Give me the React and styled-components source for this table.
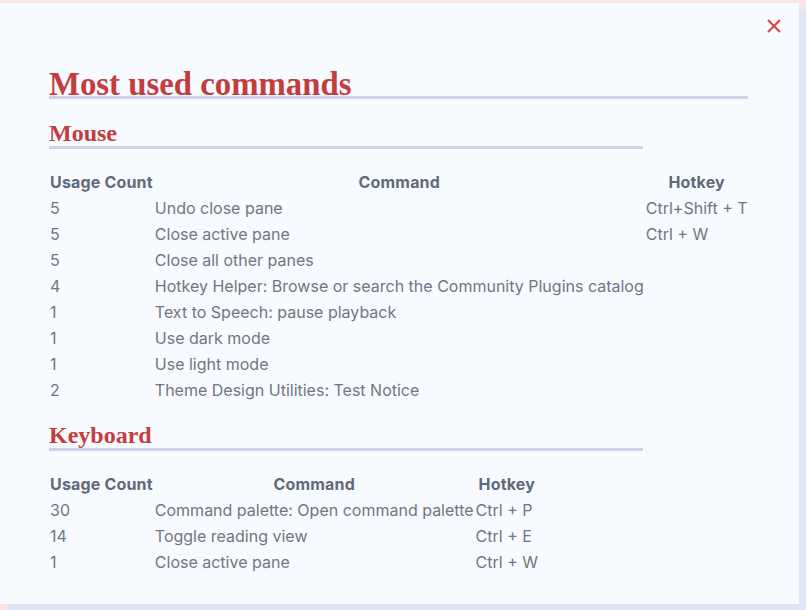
import React from 'react';
import styled, { createGlobalStyle } from 'styled-components';

const GlobalStyle = createGlobalStyle`
    html, body { margin: 0; padding: 0; background: #fae3e6; }
    body { font-family: Inter, "Noto Sans", sans-serif; overflow: hidden; }
`;

const mouseRows = [
    { count: 5, command: 'Undo close pane', hotkey: 'Ctrl+Shift + T' },
    { count: 5, command: 'Close active pane', hotkey: 'Ctrl + W' },
    { count: 5, command: 'Close all other panes', hotkey: '' },
    { count: 4, command: 'Hotkey Helper: Browse or search the Community Plugins catalog', hotkey: '' },
    { count: 1, command: 'Text to Speech: pause playback', hotkey: '' },
    { count: 1, command: 'Use dark mode', hotkey: '' },
    { count: 1, command: 'Use light mode', hotkey: '' },
    { count: 2, command: 'Theme Design Utilities: Test Notice', hotkey: '' },
];

const keyboardRows = [
    { count: 30, command: 'Command palette: Open command palette', hotkey: 'Ctrl + P' },
    { count: 14, command: 'Toggle reading view', hotkey: 'Ctrl + E' },
    { count: 1, command: 'Close active pane', hotkey: 'Ctrl + W' },
];

const UsageTable = ({ rows }) => (
    <Table>
        <thead>
            <tr>
                <Th>Usage Count</Th>
                <Th>Command</Th>
                <Th>Hotkey</Th>
            </tr>
        </thead>
        <tbody>
            {rows.map((row, i) => (
                <tr key={i}>
                    <Td>{row.count}</Td>
                    <Td>{row.command}</Td>
                    <Td>{row.hotkey}</Td>
                </tr>
            ))}
        </tbody>
    </Table>
);

const App = () => {
    return (
        <>
            <GlobalStyle />
            <Page>
                <Modal>
                    <CloseButton aria-label="Close">
                        <svg width="14" height="14" viewBox="0 0 14 14">
                            <path d="M1 1 L13 13 M13 1 L1 13" stroke="#d6494a" strokeWidth="2.2" />
                        </svg>
                    </CloseButton>
                    <Title>Most used commands</Title>
                    <Section>
                        <SectionTitle>Mouse</SectionTitle>
                        <UsageTable rows={mouseRows} />
                    </Section>
                    <Section $gap={19}>
                        <SectionTitle>Keyboard</SectionTitle>
                        <UsageTable rows={keyboardRows} />
                    </Section>
                </Modal>
            </Page>
        </>
    );
};

export default App;

const Page = styled.div`
    width: 806px; height: 610px; padding-top: 3px; box-sizing: border-box;
`

const Modal = styled.div`
    position: relative;
    width: 799px; height: 601px; box-sizing: border-box;
    padding: 69px 51px 0 49px;
    background: #f7faff;
    box-shadow: 7px 6px 0 #dfe6f3;
`

const CloseButton = styled.button`
    position: absolute; top: 16px; right: 18px;
    display: flex; padding: 0; border: none; background: none; cursor: pointer;
`

const Title = styled.h1`
    margin: 0;
    font-family: "Liberation Serif", serif; font-weight: 700;
    font-size: 32.8px; line-height: 24px;
    color: #c33d3f;
    border-bottom: 3px solid #cbd4e7;
`

const Section = styled.section`
    margin-top: ${p => p.$gap ?? 21}px;
`

const SectionTitle = styled.h2`
    margin: 0 0 20px;
    width: 85%;
    font-family: "Liberation Serif", serif; font-weight: 700;
    font-size: 24px; line-height: 26px;
    color: #c33d3f;
    border-bottom: 3px solid #cbd4e7;
`

const Table = styled.table`
    border-collapse: collapse;
    font-size: 16px; line-height: 20px;
`

const Th = styled.th`
    padding: 3px 1px; white-space: nowrap;
    font-weight: 700; text-align: center; letter-spacing: 0.18px;
    color: #5f6a78;
`

const Td = styled.td`
    padding: 3px 1px; white-space: nowrap;
    color: #6f7782;
`
